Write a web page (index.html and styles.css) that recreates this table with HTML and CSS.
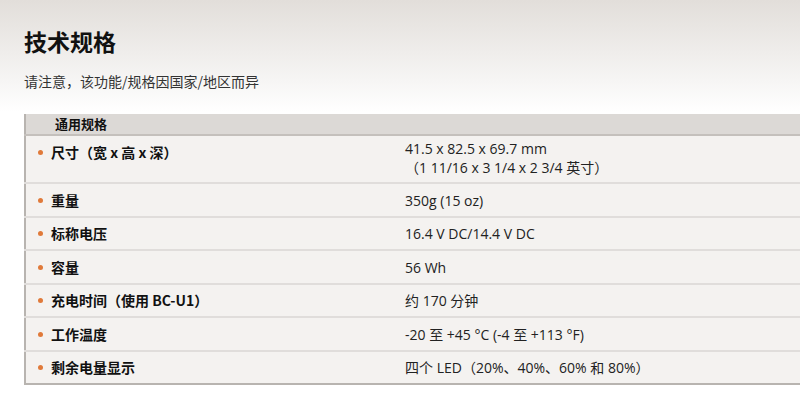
FILE: index.html
```html
<!DOCTYPE html>
<html lang="zh-CN">
<head>
    <meta charset="UTF-8">
    <title>技术规格</title>
    <link rel="stylesheet" href="styles.css">
</head>
<body>
    <div class="page">
        <h1>技术规格</h1>
        <p class="note">请注意，该功能/规格因国家/地区而异</p>

        <table class="spec-table">
            <thead>
                <tr><th colspan="2">通用规格</th></tr>
            </thead>
            <tbody>
                <tr class="tall">
                    <td class="label"><span class="dot"></span>尺寸（宽 x 高 x 深）</td>
                    <td class="value">41.5 x 82.5 x 69.7 mm<br>（1 11/16 x 3 1/4 x 2 3/4 英寸）</td>
                </tr>
                <tr>
                    <td class="label"><span class="dot"></span>重量</td>
                    <td class="value">350g (15 oz)</td>
                </tr>
                <tr>
                    <td class="label"><span class="dot"></span>标称电压</td>
                    <td class="value">16.4 V DC/14.4 V DC</td>
                </tr>
                <tr>
                    <td class="label"><span class="dot"></span>容量</td>
                    <td class="value">56 Wh</td>
                </tr>
                <tr>
                    <td class="label"><span class="dot"></span>充电时间（使用 BC-U1）</td>
                    <td class="value">约 170 分钟</td>
                </tr>
                <tr>
                    <td class="label"><span class="dot"></span>工作温度</td>
                    <td class="value">-20 至 +45 °C (-4 至 +113 °F)</td>
                </tr>
                <tr>
                    <td class="label"><span class="dot"></span>剩余电量显示</td>
                    <td class="value">四个 LED（20%、40%、60% 和 80%）</td>
                </tr>
            </tbody>
        </table>
    </div>
</body>
</html>
```

FILE: styles.css
```css
:root {
    --text-dark: #111; --text-body: #222; --row-bg: #f4f2f0;
    --head-bg: #dcd9d6; --line: #e0dddb; --edge: #b8b4b0; --orange: #e07a3a;
}
html, body { margin: 0; padding: 0; }
body {
    font-family: "Open Sans", "Noto Sans CJK SC", sans-serif;
    background: linear-gradient(#e2deda 0, #f6f5f4 80px, #fff 112px) no-repeat;
    background-color: #fff; color: var(--text-body); min-height: 412px;
}
.page { padding: 26px 0 0 24px; overflow: hidden; }
h1 {
    font-family: "Noto Sans CJK SC", sans-serif; font-size: 23px; font-weight: 700;
    line-height: 30px; margin: 0; color: var(--text-dark);
}
.note {
    font-family: "Noto Sans CJK SC", sans-serif; font-size: 14px; line-height: 20px;
    margin: 15px 0 0; color: #333;
}
.spec-table {
    width: 800px; margin-top: 23px; border-collapse: collapse;
    border-left: 2px solid var(--edge); border-bottom: 2px solid var(--edge);
    background: var(--row-bg); font-size: 14px;
}
.spec-table th {
    text-align: left; background: var(--head-bg); border-bottom: 2px solid #c4c0bc;
    font-family: "Noto Sans CJK SC", sans-serif; font-size: 13px; font-weight: 700;
    height: 20px; line-height: 20px; padding: 0 0 0 29px; color: var(--text-dark);
}
.spec-table td {
    border-top: 2px solid var(--line); padding: 6.5px 0 6px; line-height: 19px;
    vertical-align: middle;
}
.spec-table tbody tr:first-child td { border-top: none; }
.label {
    width: 367px; padding-left: 12px !important;
    font-family: "Noto Sans CJK SC", sans-serif; font-weight: 700; color: var(--text-dark);
}
.value { color: var(--text-body); }
.dot {
    display: inline-block; width: 5px; height: 5px; border-radius: 50%;
    background: var(--orange); margin-right: 8px; vertical-align: 3px;
}
.tall td.label { vertical-align: top; padding: 7px 0 0; }
.tall td.value { padding: 3px 0 5px; }
```
